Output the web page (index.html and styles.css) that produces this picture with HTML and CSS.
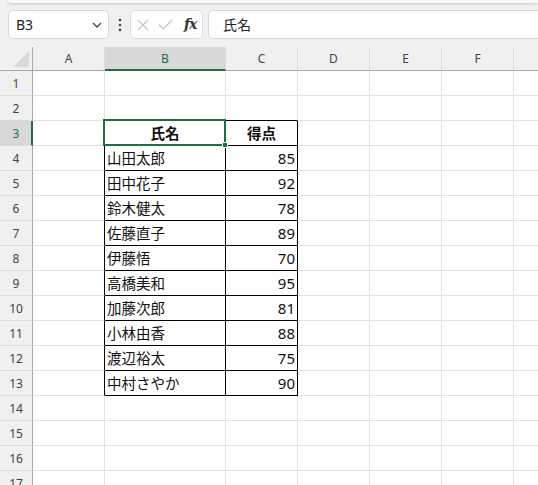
FILE: index.html
```html
<!DOCTYPE html>
<html lang="ja">
<head>
<meta charset="utf-8">
<link rel="stylesheet" href="styles.css">
</head>
<body>
<div class="app">
  <div class="ribbon-edge"></div>
  <div class="fbar">
    <div class="namebox">
      <span class="nb-text">B3</span>
      <svg class="chev" width="10" height="6" viewBox="0 0 10 6"><path d="M1 1 L5 5 L9 1" fill="none" stroke="#444" stroke-width="1.3"/></svg>
    </div>
    <svg class="dots" width="4" height="14" viewBox="0 0 4 14"><circle cx="2" cy="2" r="1.3" fill="#444"/><circle cx="2" cy="7" r="1.3" fill="#444"/><circle cx="2" cy="12" r="1.3" fill="#444"/></svg>
    <div class="fxbox">
      <svg class="ico-x" width="12" height="12" viewBox="0 0 12 12"><path d="M1 1 L11 11 M11 1 L1 11" stroke="#c4c4c4" stroke-width="1.2" fill="none"/></svg>
      <svg class="ico-ok" width="15" height="11" viewBox="0 0 15 11"><path d="M1 5.5 L5.5 10 L14 1" stroke="#c4c4c4" stroke-width="1.2" fill="none"/></svg>
      <span class="fx">fx</span>
    </div>
    <div class="finput">氏名</div>
  </div>
  <div class="sheet">
    <div class="corner"><div class="tri"></div></div>
    <div class="ch">A</div><div class="ch sel">B</div><div class="ch">C</div><div class="ch">D</div><div class="ch">E</div><div class="ch">F</div><div class="ch"></div>

    <div class="rh">1</div><div class="c"></div><div class="c"></div><div class="c"></div><div class="c"></div><div class="c"></div><div class="c"></div><div class="c"></div>
    <div class="rh">2</div><div class="c"></div><div class="c bb"></div><div class="c bb"></div><div class="c"></div><div class="c"></div><div class="c"></div><div class="c"></div>
    <div class="rh sel">3</div><div class="c br"></div><div class="c t hd active">氏名<div class="selbox"><div class="handle"></div></div></div><div class="c t hd">得点</div><div class="c"></div><div class="c"></div><div class="c"></div><div class="c"></div>
    <div class="rh">4</div><div class="c br"></div><div class="c t">山田太郎</div><div class="c t num">85</div><div class="c"></div><div class="c"></div><div class="c"></div><div class="c"></div>
    <div class="rh">5</div><div class="c br"></div><div class="c t">田中花子</div><div class="c t num">92</div><div class="c"></div><div class="c"></div><div class="c"></div><div class="c"></div>
    <div class="rh">6</div><div class="c br"></div><div class="c t">鈴木健太</div><div class="c t num">78</div><div class="c"></div><div class="c"></div><div class="c"></div><div class="c"></div>
    <div class="rh">7</div><div class="c br"></div><div class="c t">佐藤直子</div><div class="c t num">89</div><div class="c"></div><div class="c"></div><div class="c"></div><div class="c"></div>
    <div class="rh">8</div><div class="c br"></div><div class="c t">伊藤悟</div><div class="c t num">70</div><div class="c"></div><div class="c"></div><div class="c"></div><div class="c"></div>
    <div class="rh">9</div><div class="c br"></div><div class="c t">高橋美和</div><div class="c t num">95</div><div class="c"></div><div class="c"></div><div class="c"></div><div class="c"></div>
    <div class="rh">10</div><div class="c br"></div><div class="c t">加藤次郎</div><div class="c t num">81</div><div class="c"></div><div class="c"></div><div class="c"></div><div class="c"></div>
    <div class="rh">11</div><div class="c br"></div><div class="c t">小林由香</div><div class="c t num">88</div><div class="c"></div><div class="c"></div><div class="c"></div><div class="c"></div>
    <div class="rh">12</div><div class="c br"></div><div class="c t">渡辺裕太</div><div class="c t num">75</div><div class="c"></div><div class="c"></div><div class="c"></div><div class="c"></div>
    <div class="rh">13</div><div class="c br"></div><div class="c t">中村さやか</div><div class="c t num">90</div><div class="c"></div><div class="c"></div><div class="c"></div><div class="c"></div>
    <div class="rh">14</div><div class="c"></div><div class="c"></div><div class="c"></div><div class="c"></div><div class="c"></div><div class="c"></div><div class="c"></div>
    <div class="rh">15</div><div class="c"></div><div class="c"></div><div class="c"></div><div class="c"></div><div class="c"></div><div class="c"></div><div class="c"></div>
    <div class="rh">16</div><div class="c"></div><div class="c"></div><div class="c"></div><div class="c"></div><div class="c"></div><div class="c"></div><div class="c"></div>
    <div class="rh">17</div><div class="c"></div><div class="c"></div><div class="c"></div><div class="c"></div><div class="c"></div><div class="c"></div><div class="c"></div>
  </div>
</div>
</body>
</html>
```
FILE: styles.css
```css
* { box-sizing: border-box; }
html, body { margin: 0; padding: 0; }
body {
  background: #f0f0f0;
  font-family: "Noto Sans", "Noto Sans CJK JP", sans-serif;
  width: 538px;
  height: 485px;
  overflow: hidden;
}
.app { width: 538px; height: 485px; overflow: hidden; }
.ribbon-edge {
  height: 3px;
  margin-left: 8px;
  background: #fafafa;
  border-bottom-left-radius: 6px;
  box-shadow: 0 1px 3px rgba(0,0,0,0.18);
}
.fbar {
  display: flex;
  align-items: center;
  height: 29px;
  margin-top: 7px;
  padding-left: 8px;
}
.namebox {
  width: 101px;
  height: 29px;
  background: #fff;
  border: 1px solid #d6d6d6;
  border-radius: 5px;
  display: flex;
  align-items: center;
  justify-content: space-between;
  padding: 0 6px 0 7px;
}
.nb-text { font-size: 14px; color: #222; font-family: "Noto Sans", sans-serif; }
.chev { margin-top: 1px; }
.dots { margin-left: 9px; margin-right: 8px; }
.fxbox {
  width: 73px;
  height: 29px;
  background: #fff;
  border: 1px solid #dcdcdc;
  border-radius: 5px;
  display: flex;
  align-items: center;
  padding-left: 6px;
}
.ico-x { margin-right: 9px; }
.ico-ok { margin-right: 11px; }
.fx {
  font-family: "DejaVu Serif", "Liberation Serif", serif;
  font-style: italic;
  font-weight: bold;
  font-size: 14px;
  color: #333;
  letter-spacing: -1px;
  margin-top: -2px;
}
.finput {
  margin-left: 5px;
  flex: 1;
  height: 29px;
  margin-right: -10px;
  background: #fff;
  border: 1px solid #d6d6d6;
  border-radius: 5px;
  padding-left: 14px;
  font-size: 14px;
  line-height: 27px;
  color: #222;
  font-family: "Noto Sans CJK JP", sans-serif;
}
.sheet {
  margin-top: 8px;
  display: grid;
  grid-template-columns: 33px 72px 121px 72px 72px 72px 72px 72px;
  grid-template-rows: 24px;
  grid-auto-rows: 25px;
  background: #fff;
}
.corner {
  background: #f0f0f0;
  border-right: 1px solid #a8a8a8;
  border-bottom: 1px solid #a8a8a8;
  position: relative;
}
.tri {
  position: absolute;
  right: 3px;
  bottom: 3px;
  width: 0; height: 0;
  border-left: 16px solid transparent;
  border-bottom: 16px solid #d9d9d9;
}
.ch {
  background: #f0f0f0;
  border-right: 1px solid #dcdcdc;
  border-bottom: 1px solid #a8a8a8;
  font-size: 12px;
  color: #444;
  display: flex;
  align-items: center;
  justify-content: center;
  padding-bottom: 1px;
}
.ch.sel {
  background: #d8d8d8;
  border-bottom: 2px solid #1e6e42;
  color: #1e6e42;
  padding-top: 1px;
}
.rh {
  background: #f0f0f0;
  border-right: 1px solid #a8a8a8;
  border-bottom: 1px solid #dcdcdc;
  font-size: 12px;
  color: #444;
  display: flex;
  align-items: center;
  justify-content: center;
}
.rh.sel {
  background: #d8d8d8;
  border-right: 2px solid #1e6e42;
  color: #1e6e42;
  padding-left: 1px;
}
.c {
  border-right: 1px solid #e1e1e1;
  border-bottom: 1px solid #e1e1e1;
  font-family: "Noto Sans CJK JP", sans-serif;
  font-size: 14.5px;
  color: #111;
  line-height: 24px;
  white-space: nowrap;
  overflow: visible;
}
.c.bb { border-bottom-color: #000; }
.c.br { border-right-color: #000; }
.c.t {
  border-right-color: #000;
  border-bottom-color: #000;
  padding-left: 2px;
}
.c.num {
  text-align: right;
  padding-right: 2px;
  font-family: "Noto Sans", sans-serif;
  font-size: 15px;
}
.c.hd {
  text-align: center;
  font-weight: bold;
  padding-left: 0;
}
.active { position: relative; }
.selbox {
  position: absolute;
  left: -2px;
  top: -2px;
  right: -1px;
  bottom: -1px;
  border: 2px solid #1e6e42;
  pointer-events: none;
}
.handle {
  position: absolute;
  right: -4px;
  bottom: -4px;
  width: 6px;
  height: 6px;
  background: #1e6e42;
  border: 1px solid #fff;
}
```
